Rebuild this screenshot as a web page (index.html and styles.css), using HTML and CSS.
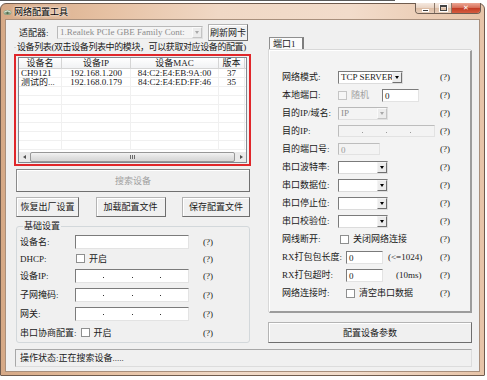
FILE: index.html
```html
<!doctype html>
<html lang="zh">
 <head>
  <meta charset="UTF-8">
  <link rel="stylesheet" href="styles.css">
  <title>网络配置工具</title>
 </head>
 <body>
  <div class="behind"></div>
  <div class="win">
   <div class="titlebar">
    <svg class="ico" width="9" height="7" viewBox="0 0 9 7">
     <ellipse cx="4.5" cy="3.5" rx="4" ry="2.6" fill="#8fa487"/>
     <path d="M1.2 3.2 Q4.5 0.4 7.8 3.2" fill="none" stroke="#e9f0e4" stroke-width="0.9"/>
     <circle cx="4.5" cy="4.2" r="1.1" fill="#4f6a4a"/>
    </svg>
    <span class="ttl">网络配置工具</span>
    <div class="caps">
     <span class="cap cmin"><i></i></span>
     <span class="cap cmax"><i></i></span>
     <span class="cap cclose">✕</span>
    </div>
   </div>
   <div class="client">
    <div class="cols">
     <!-- 左边：设备列表与基础设置 -->
     <div class="lcol">
      <div class="adrow">
       <span class="adlbl">适配器:</span>
       <span class="sel dis wad"><span class="stext">1.Realtek PCIe GBE Family Cont:</span><span class="arr"></span></span>
       <span class="btn brefresh">刷新网卡</span>
      </div>
      <div class="gtitle">设备列表(双击设备列表中的模块，可以获取对应设备的配置)</div>
      <div class="redbox">
       <div class="list">
        <div class="lhead">
         <span class="c1">设备名</span><span class="c2">设备IP</span><span class="c3">设备MAC</span><span class="c4">版本</span><span class="c5"></span>
        </div>
        <div class="lbody">
         <div class="lrow"><span class="c1 tl">CH9121</span><span class="c2">192.168.1.200</span><span class="c3">84:C2:E4:EB:9A:00</span><span class="c4">37</span><span class="c5"></span></div>
         <div class="lrow"><span class="c1 tl">测试的...</span><span class="c2">192.168.0.179</span><span class="c3">84:C2:E4:ED:FF:46</span><span class="c4">35</span><span class="c5"></span></div>
         <div class="lrow"><span class="c1"></span><span class="c2"></span><span class="c3"></span><span class="c4"></span><span class="c5"></span></div>
         <div class="lrow"><span class="c1"></span><span class="c2"></span><span class="c3"></span><span class="c4"></span><span class="c5"></span></div>
         <div class="lrow"><span class="c1"></span><span class="c2"></span><span class="c3"></span><span class="c4"></span><span class="c5"></span></div>
         <div class="lrow"><span class="c1"></span><span class="c2"></span><span class="c3"></span><span class="c4"></span><span class="c5"></span></div>
         <div class="lrow"><span class="c1"></span><span class="c2"></span><span class="c3"></span><span class="c4"></span><span class="c5"></span></div>
         <div class="lrow"><span class="c1"></span><span class="c2"></span><span class="c3"></span><span class="c4"></span><span class="c5"></span></div>
         <div class="lrow"><span class="c1"></span><span class="c2"></span><span class="c3"></span><span class="c4"></span><span class="c5"></span></div>
        </div>
        <div class="hscroll">
         <span class="sarr sl"></span>
         <span class="thumb"><i></i><i></i><i></i></span>
         <span class="sarr sr"></span>
        </div>
       </div>
      </div>
      <div class="btn bsearch">搜索设备</div>
      <div class="btnrow">
       <span class="btn b1">恢复出厂设置</span>
       <span class="btn b2">加载配置文件</span>
       <span class="btn b3">保存配置文件</span>
      </div>
      <fieldset class="basic">
       <legend>基础设置</legend>
       <div class="frow h17"><span class="flbl">设备名:</span><span class="inp"></span><span class="q">(?)</span></div>
       <div class="frow h17"><span class="flbl">DHCP:</span><span class="cb cbd"></span><span class="cbt">开启</span><span class="q">(?)</span></div>
       <div class="frow h18"><span class="flbl">设备IP:</span><span class="inp ip"><i></i><i></i><i></i></span><span class="q">(?)</span></div>
       <div class="frow"><span class="flbl">子网掩码:</span><span class="inp ip"><i></i><i></i><i></i></span><span class="q">(?)</span></div>
       <div class="frow"><span class="flbl">网关:</span><span class="inp ip"><i></i><i></i><i></i></span><span class="q">(?)</span></div>
       <div class="frow"><span>串口协商配置:</span><span class="cb cbs"></span><span class="cbt">开启</span><span class="q">(?)</span></div>
      </fieldset>
     </div>
     <!-- 右边：端口参数 -->
     <div class="rcol">
      <div class="tab">端口1</div>
      <div class="pane">
       <div class="prow"><span class="plbl">网络模式:</span><span class="sel w65"><span class="stext">TCP SERVER</span><span class="arr"></span></span><span class="q">(?)</span></div>
       <div class="prow"><span class="plbl">本地端口:</span><span class="cb dis"></span><span class="cbt gray rnd">随机</span><span class="inp w37">0</span><span class="q">(?)</span></div>
       <div class="prow"><span class="plbl">目的IP/域名:</span><span class="sel dis w50"><span class="stext">IP</span><span class="arr"></span></span><span class="q">(?)</span></div>
       <div class="prow"><span class="plbl">目的IP:</span><span class="inp ip dis w97"><i></i><i></i><i></i></span><span class="q">(?)</span></div>
       <div class="prow"><span class="plbl">目的端口号:</span><span class="inp dis w42">0</span><span class="q">(?)</span></div>
       <div class="prow"><span class="plbl">串口波特率:</span><span class="sel w50"><span class="stext"></span><span class="arr"></span></span><span class="q">(?)</span></div>
       <div class="prow"><span class="plbl">串口数据位:</span><span class="sel w50"><span class="stext"></span><span class="arr"></span></span><span class="q">(?)</span></div>
       <div class="prow"><span class="plbl">串口停止位:</span><span class="sel w50"><span class="stext"></span><span class="arr"></span></span><span class="q">(?)</span></div>
       <div class="prow"><span class="plbl">串口校验位:</span><span class="sel w50"><span class="stext"></span><span class="arr"></span></span><span class="q">(?)</span></div>
       <div class="prow"><span class="plbl l58">网线断开:</span><span class="cb"></span><span class="cbt">关闭网络连接</span><span class="q">(?)</span></div>
       <div class="prow"><span class="plbl l64">RX打包包长度:</span><span class="inp w37">0</span><span class="unit u1">(&lt;=1024)</span><span class="q">(?)</span></div>
       <div class="prow"><span class="plbl l64">RX打包超时:</span><span class="inp w37">0</span><span class="unit u2">(10ms)</span><span class="q">(?)</span></div>
       <div class="prow"><span class="plbl l64">网络连接时:</span><span class="cb"></span><span class="cbt">清空串口数据</span><span class="q">(?)</span></div>
      </div>
      <div class="btn bcfg">配置设备参数</div>
     </div>
    </div>
    <div class="status">操作状态:正在搜索设备.....</div>
   </div>
  </div>
 </body>
</html>
```

FILE: styles.css
```css
body{margin:0;background:#fff;font:9px/10px "Liberation Serif","Noto Sans CJK SC",serif;color:#1a1a1a;}
.behind{height:3px;width:395px;box-sizing:border-box;border-top:1px solid #5a5a5a;}

/* 窗口外框 */
.win{
    width:485px;height:373px;box-sizing:border-box;
    border:1px solid #705c4e;border-radius:6px 6px 1px 1px;
    background:linear-gradient(to right,#d6a986,#e6c1a3 22%,#f0d8c5 45%,#f2dccb 72%,#e7c4a8);
    padding:0 4px 3px;
    display:flex;flex-direction:column;
}
.titlebar{height:15px;flex:none;display:flex;align-items:center;}
.ico{margin:1px 0 0 -2px;}
.ttl{margin-left:2px;color:#000;text-shadow:0 0 4px #fff,0 0 2px #fff;}
.caps{
    margin:-1px -1px 0 auto;align-self:flex-start;
    display:flex;height:11px;box-sizing:border-box;
    border:1px solid #6f5f54;border-top:none;border-radius:0 0 4px 4px;overflow:hidden;
}
.cap{display:flex;align-items:center;justify-content:center;box-sizing:border-box;}
.cmin,.cmax{background:linear-gradient(#f5e9e0,#ead5c5 45%,#dcbca3 50%,#e8cfbb);border-right:1px solid #8b7768;}
.cmin{width:19px;}
.cmax{width:17px;}
.cmin i{width:5px;height:1px;background:#3c3c3c;border:1px solid #fff;margin-top:4px;}
.cmax i{width:5px;height:3px;border:1px solid #444;border-top-width:2px;box-shadow:0 0 0 1px #fff;}
.cclose{width:28px;background:linear-gradient(#eca794,#d8705a 45%,#c23a22 50%,#d45c40);color:#fff;font:bold 7px/1 "DejaVu Sans",sans-serif;}

/* 客户区 */
.client{flex:1;background:#f0f0f0;border:1px solid #a88f7c;display:flex;flex-direction:column;}
.cols{display:flex;gap:17px;padding:0 7px 0 8px;height:323px;}
.lcol{width:237px;display:flex;flex-direction:column;}
.rcol{width:204px;display:flex;flex-direction:column;}

.btn{
    display:flex;align-items:center;justify-content:center;box-sizing:border-box;
    background:#f0f0f0;border:1px solid;border-color:#b4b4b4 #6e6e6e #6e6e6e #b4b4b4;
    box-shadow:inset 1px 1px #fff;
}

.adrow{display:flex;align-items:center;height:17px;margin-top:4px;}
.adlbl{margin-left:5px;width:38px;}
.wad{width:146px;height:14px;}
.brefresh{width:40px;height:17px;margin-left:5px;}

.sel{display:flex;height:13px;box-sizing:border-box;border:1px solid;border-color:#7b7b7b #dcdcdc #dcdcdc #7b7b7b;background:#fff;}
.sel .stext{flex:1;padding-left:2px;line-height:11px;white-space:nowrap;overflow:hidden;}
.sel .arr{
    width:10px;box-sizing:border-box;border:1px solid;border-color:#f4f4f4 #707070 #707070 #f4f4f4;
    background:#ececec;display:flex;align-items:center;justify-content:center;
}
.sel .arr::after{content:"";border-style:solid;border-width:3px 2.5px 0;border-color:#000 transparent transparent;}
.sel.dis{background:#f4f4f4;border-color:#b9b9b9 #e0e0e0 #e0e0e0 #b9b9b9;color:#8c8c8c;}
.sel.dis .arr{border-color:#fafafa #c4c4c4 #c4c4c4 #fafafa;}
.sel.dis .arr::after{border-top-color:#a8a8a8;}
.w65{width:65px;}
.w50{width:50px;}

.gtitle{display:flex;align-items:center;height:10px;margin-top:1px;white-space:nowrap;letter-spacing:-0.4px;}
.gtitle::before{content:"";width:2px;border-top:1px solid #d3d8db;margin-right:1px;}

/* 设备列表 */
.redbox{margin-top:2px;height:112px;box-sizing:border-box;border:2px solid #e0262a;padding:1px 2px;display:flex;}
.list{flex:1;border:1px solid #828790;background:#fff;display:flex;flex-direction:column;}
.lhead,.lrow{display:flex;}
.lhead{height:11px;background:linear-gradient(#fff,#f1f2f4);border-bottom:1px solid #d5d5d5;box-sizing:border-box;}
.lhead span{border-right:1px solid #d5d5d5;text-align:center;line-height:10px;}
.lbody{flex:1;overflow:hidden;}
.lrow{height:9px;box-sizing:border-box;border-bottom:1px solid #f0f0f0;}
.lrow span{border-right:1px solid #f0f0f0;text-align:center;line-height:9px;white-space:nowrap;overflow:hidden;}
.lrow .tl{text-align:left;padding-left:2px;}
.c1{width:43px;box-sizing:border-box;}
.c2{width:69px;box-sizing:border-box;}
.c3{width:88px;box-sizing:border-box;}
.c4{width:26px;box-sizing:border-box;}
.c5{flex:1;border-right:none !important;}
.hscroll{height:10px;display:flex;background:#eaeaea;}
.sarr{width:10px;display:flex;align-items:center;justify-content:center;}
.sl::after{content:"";border-style:solid;border-width:2.5px 3px 2.5px 0;border-color:transparent #505050 transparent transparent;}
.sr::after{content:"";border-style:solid;border-width:2.5px 0 2.5px 3px;border-color:transparent transparent transparent #505050;}
.thumb{
    flex:1;margin:0 1px;box-sizing:border-box;border:1px solid #979797;border-radius:2px;
    background:linear-gradient(#f3f3f3,#e2e2e2 50%,#d6d6d6);
    display:flex;align-items:center;justify-content:center;gap:1px;
}
.thumb i{width:1px;height:4px;background:#6a6a6a;}

.bsearch{margin:3px 1px 0 2px;height:23px;color:#a0a0a0;border-color:#8a8a8a #707070 #707070 #8a8a8a;}
.btnrow{display:flex;justify-content:space-between;height:20px;margin:5px 1px 0 2px;}
.b1{width:63px;}
.b2{width:70px;}
.b3{width:68px;}

/* 基础设置 */
.basic{
    margin:3px 1px 0 2px;padding:1px 2px 0 3px;height:123px;box-sizing:border-box;
    border:1px solid #d3d8db;border-radius:3px;min-width:0;
}
.basic legend{padding:0 1px;margin-left:3px;line-height:12px;}
.frow{display:flex;align-items:center;height:19px;}
.frow.h17{height:17px;}
.frow.h18{height:18px;}
.flbl{width:55px;}
.inp{
    width:114px;height:14px;box-sizing:border-box;background:#fff;
    border:1px solid;border-color:#7b7b7b #e3e3e3 #e3e3e3 #7b7b7b;
    padding-left:2px;line-height:12px;
}
.inp.ip{display:flex;align-items:center;justify-content:space-evenly;padding:0;}
.inp.ip i{width:1px;height:1px;background:#333;margin-top:2px;}
.inp.dis{background:#f3f3f3;border-color:#bdbdbd #e2e2e2 #e2e2e2 #bdbdbd;color:#9a9a9a;}
.inp.ip.dis i{background:#9a9a9a;}
.cb{width:7px;height:7px;border:1px solid #8e8f8f;background:#fff;flex:none;}
.cb.dis{border-color:#c5c5c5;background:#f6f6f6;}
.cbd{margin-left:1px;}
.cbs{margin-left:4px;}
.cbt{margin-left:4px;}
.gray{color:#a0a0a0;}
.q{margin-left:auto;width:12px;margin-right:32px;}

/* 端口1 */
.tab{
    margin:17px 0 0 1px;width:35px;height:13px;box-sizing:border-box;
    border:1px solid #8f8f8f;border-bottom:none;border-right:2px solid #7e7e7e;
    background:#fbfbfb;padding-left:3px;line-height:12px;
}
.pane{
    margin-left:1px;height:263px;box-sizing:border-box;background:#f3f3f3;
    border-top:1px solid #fff;border-left:1px solid #fff;
    border-right:2px solid #9c9c9c;border-bottom:2px solid #9c9c9c;
    box-shadow:-1px -1px 0 #d8d8d8;
    padding:17px 0 0 12px;
}
.prow{display:flex;align-items:center;height:18px;}
.plbl{width:56px;white-space:nowrap;}
.plbl.l58{width:58px;}
.plbl.l64{width:64px;}
.pane .q{margin-right:18px;}
.rnd{width:24px;}
.w37{width:37px;height:13px;margin-left:7px;}
.l64 + .w37{margin-left:0;}
.w97{width:97px;height:12px;}
.w42{width:42px;height:12px;}
.l64 + .cb{margin-left:0;}
.unit.u1{margin-left:5px;}
.unit.u2{margin-left:13px;}
.bcfg{margin-top:9px;height:21px;}

.status{
    margin:6px 7px 0 9px;height:18px;box-sizing:border-box;
    border:1px solid #cfcfcf;border-color:#a8a8a8 #dcdcdc #dcdcdc #a8a8a8;
    padding-left:4px;display:flex;align-items:center;
}
```
